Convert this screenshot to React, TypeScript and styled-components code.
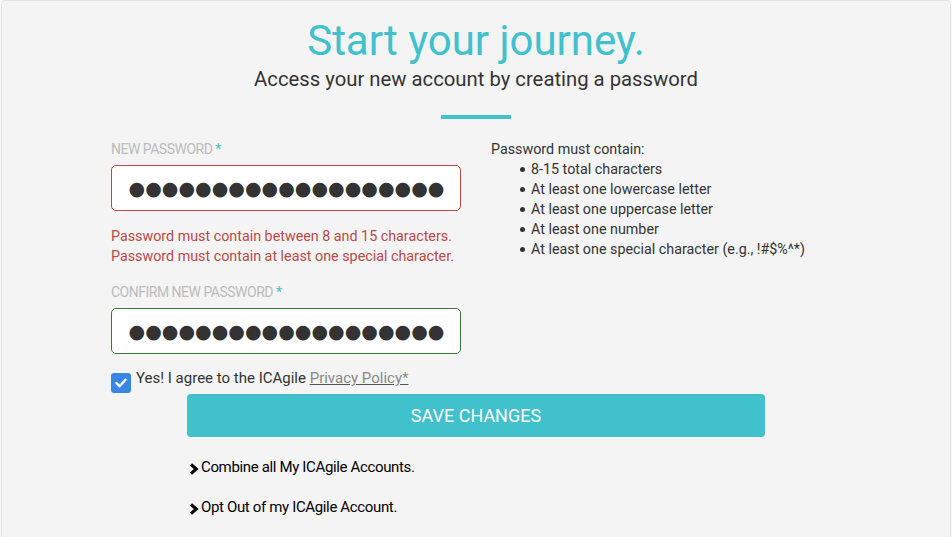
import React from "react";
import styled, { createGlobalStyle } from "styled-components";

const Global = createGlobalStyle`
  html, body { margin: 0; padding: 0; background: #ffffff; }
  body { font-family: Roboto, "Liberation Sans", sans-serif; color: #333; }
  * { box-sizing: border-box; }
`;

const Card = styled.div`
  margin: 0 1px 0 1px;
  min-height: 545px;
  background: #f4f4f4;
  border: 1px solid #e2e2e2;
  border-radius: 4px 4px 0 0;
  box-shadow: 0 0 2px rgba(0, 0, 0, 0.08);
  padding: 14px 0 0 0;
`;

const Header = styled.header`
  display: flex;
  flex-direction: column;
  align-items: center;
`;

const Title = styled.h1`
  margin: 0;
  font-size: 42px;
  font-weight: 400;
  color: #40c1cb;
  line-height: 52px;
`;

const Subtitle = styled.p`
  margin: 0;
  font-size: 20.3px;
  line-height: 24px;
  color: #333;
`;

const Divider = styled.div`
  width: 70px;
  height: 4px;
  background: #40c1cb;
  margin-top: 24px;
`;

const FormGrid = styled.div`
  display: grid;
  grid-template-columns: 350px 1fr;
  column-gap: 30px;
  padding-left: 109px;
  margin-top: 21px;
`;

const LeftCol = styled.div`
  display: flex;
  flex-direction: column;
`;

const Label = styled.label`
  font-size: 14px;
  line-height: 18px;
  color: #bcbcbc;
  text-transform: uppercase;
  letter-spacing: -0.5px;
  & span { color: #40c1cb; }
`;

const Field = styled.div<{ $state: "error" | "ok" }>`
  margin-top: 7px;
  height: 46px;
  border: 1px solid ${(p) => (p.$state === "error" ? "#b94a48" : "#3c763d")};
  border-radius: 5px;
  background: #fff;
  display: flex;
  align-items: center;
  justify-content: center;
`;

const Dots = styled.span`
  font-family: "DejaVu Sans", sans-serif;
  font-size: 19px;
  letter-spacing: 0.05px;
  color: #333;
  line-height: 1;
  padding-left: 1px;
`;

const Errors = styled.div`
  margin-top: 15px;
  font-size: 14.3px;
  line-height: 20px;
  color: #b94a48;
`;

const ConfirmBlock = styled.div`
  margin-top: 16px;
`;

const AgreeRow = styled.div`
  display: flex;
  align-items: flex-start;
  gap: 5px;
  margin-top: 14px;
  font-size: 15px;
  line-height: 20px;
  color: #333;
`;

const Box = styled.span`
  width: 20px;
  height: 20px;
  margin-top: 5px;
  border-radius: 3px;
  background: #3a86e4;
  display: inline-flex;
  align-items: center;
  justify-content: center;
  flex: none;
`;

const PolicyLink = styled.a`
  color: #888;
  text-decoration: underline;
  text-decoration-color: #555;
`;

const Rules = styled.div`
  font-size: 14.3px;
  line-height: 20px;
  color: #333;
  margin-top: -1px;
`;

const RuleList = styled.ul`
  margin: 0;
  padding-left: 29px;
  list-style: none;
  & li {
    display: flex;
    align-items: center;
  }
  & li::before {
    content: "";
    width: 5px;
    height: 5px;
    border-radius: 50%;
    background: #333;
    margin-right: 6px;
    flex: none;
  }
`;

const Actions = styled.div`
  display: flex;
  flex-direction: column;
  align-items: center;
`;

const SaveButton = styled.button`
  width: 578px;
  height: 43px;
  margin-top: 1px;
  border: none;
  border-radius: 4px;
  background: #40c1cb;
  color: #fff;
  font-family: Roboto, sans-serif;
  font-size: 18px;
  text-transform: uppercase;
  cursor: pointer;
`;

const Links = styled.div`
  width: 578px;
  padding-left: 2px;
  margin-top: 20px;
  display: flex;
  flex-direction: column;
  gap: 20px;
`;

const LinkRow = styled.a`
  display: flex;
  align-items: center;
  font-size: 15px;
  line-height: 20px;
  color: #000;
  text-decoration: none;
  letter-spacing: -0.35px;
  & svg { margin-right: 2px; margin-top: 3px; flex: none; }
`;

const Chevron = () => (
  <svg width="10" height="12" viewBox="0 0 10 12">
    <path d="M2 1.4 L7.2 6 L2 10.6" fill="none" stroke="#000" strokeWidth="3.2" strokeLinejoin="miter" />
  </svg>
);

export default function App() {
  const dots = "●".repeat(19);
  return (
    <>
      <Global />
      <Card>
        <Header>
          <Title>Start your journey.</Title>
          <Subtitle>Access your new account by creating a password</Subtitle>
          <Divider />
        </Header>
        <FormGrid>
          <LeftCol>
            <Label>
              New Password <span>*</span>
            </Label>
            <Field $state="error">
              <Dots>{dots}</Dots>
            </Field>
            <Errors>
              Password must contain between 8 and 15 characters.
              <br />
              Password must contain at least one special character.
            </Errors>
            <ConfirmBlock>
              <Label>
                Confirm New Password <span>*</span>
              </Label>
              <Field $state="ok">
                <Dots>{dots}</Dots>
              </Field>
            </ConfirmBlock>
            <AgreeRow>
              <Box>
                <svg width="12" height="10" viewBox="0 0 12 10">
                  <path d="M1.5 5.2 L4.6 8.2 L10.5 1.8" fill="none" stroke="#fff" strokeWidth="2.4" strokeLinecap="round" strokeLinejoin="round" />
                </svg>
              </Box>
              <span>
                Yes! I agree to the ICAgile <PolicyLink href="#">Privacy Policy*</PolicyLink>
              </span>
            </AgreeRow>
          </LeftCol>
          <Rules>
            Password must contain:
            <RuleList>
              <li>8-15 total characters</li>
              <li>At least one lowercase letter</li>
              <li>At least one uppercase letter</li>
              <li>At least one number</li>
              <li>At least one special character (e.g., !#$%^*)</li>
            </RuleList>
          </Rules>
        </FormGrid>
        <Actions>
          <SaveButton>Save Changes</SaveButton>
          <Links>
            <LinkRow href="#">
              <Chevron />
              Combine all My ICAgile Accounts.
            </LinkRow>
            <LinkRow href="#">
              <Chevron />
              Opt Out of my ICAgile Account.
            </LinkRow>
          </Links>
        </Actions>
      </Card>
    </>
  );
}
